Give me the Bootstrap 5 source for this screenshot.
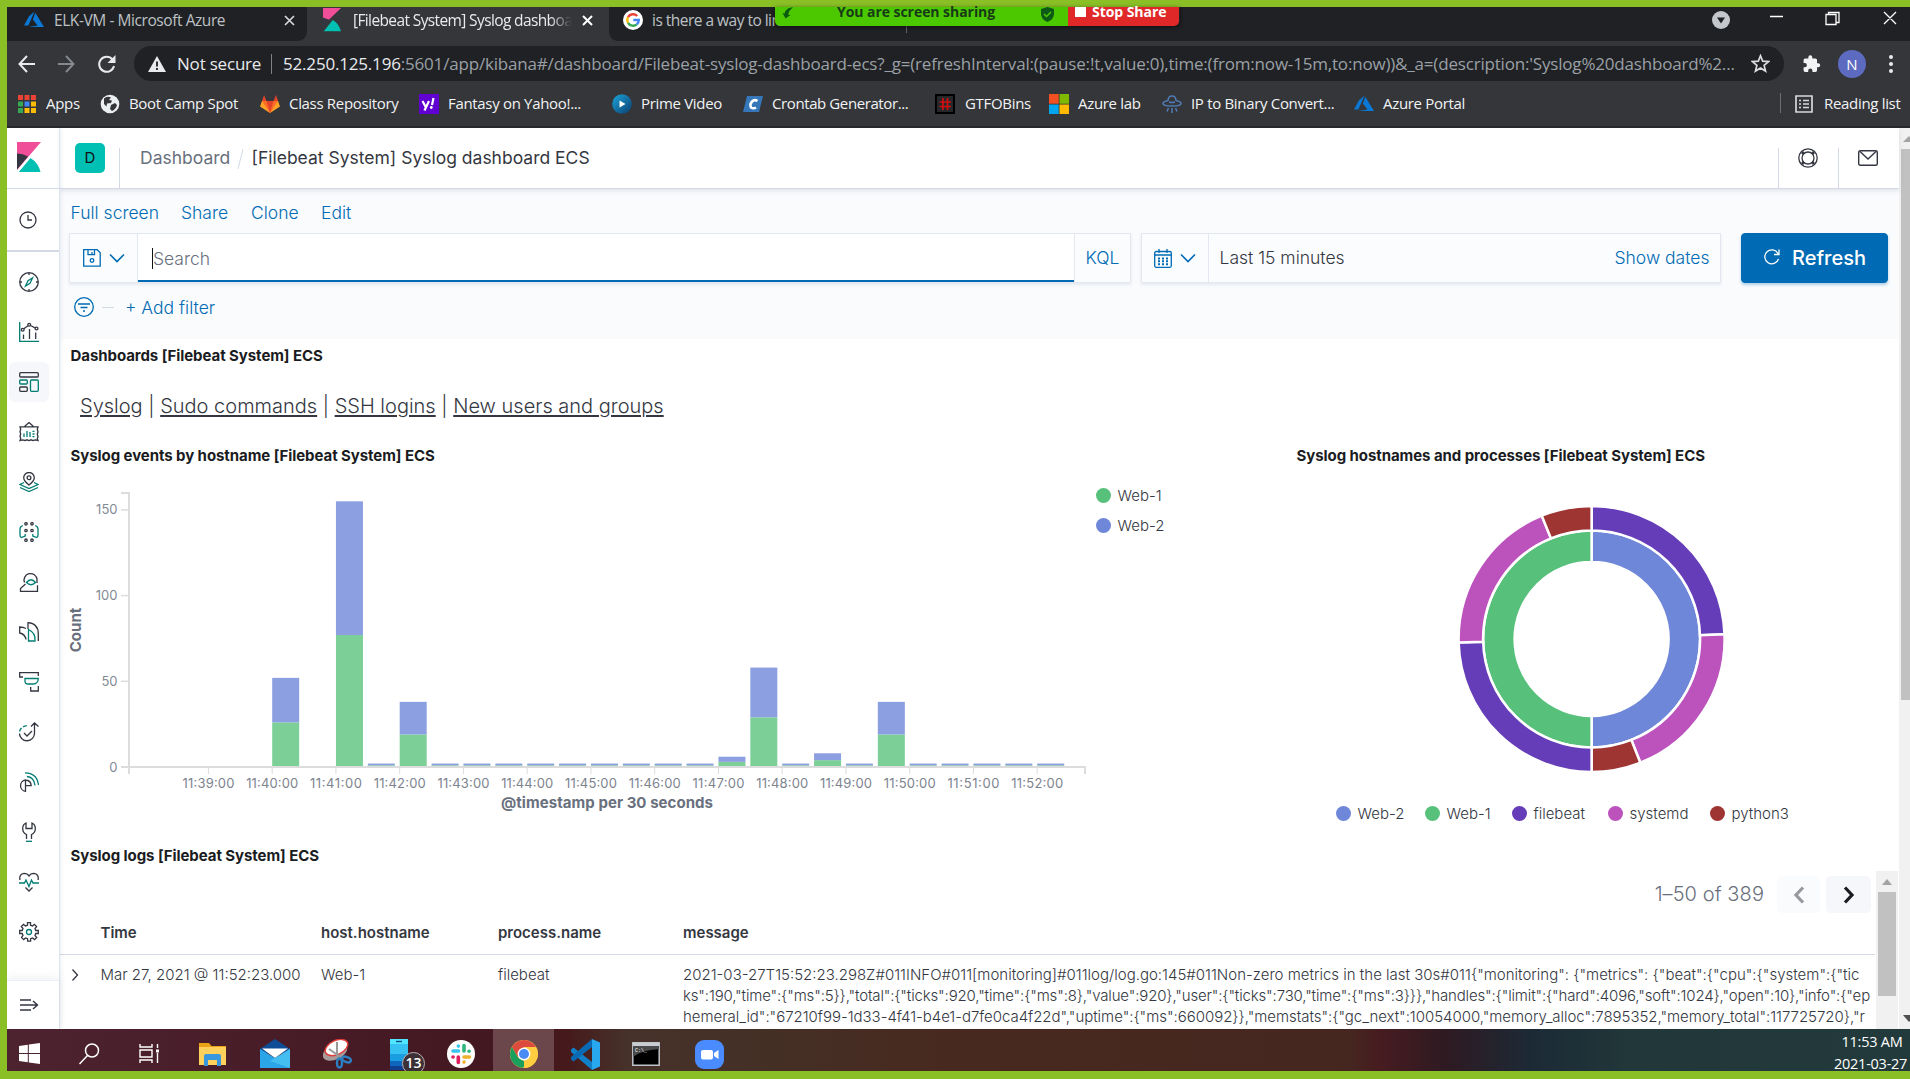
<!DOCTYPE html>
<html lang="en">
<head>
<meta charset="utf-8">
<title>[Filebeat System] Syslog dashboard ECS - Kibana</title>
<link rel="stylesheet" href="https://cdn.jsdelivr.net/npm/bootstrap@5.3.0/dist/css/bootstrap.min.css">
<style>
:root{--share:#8bbf26;--bar:#35363a;--strip:#202124;--ink:#343741;--link:#006bb4;--line:#d3dae6}
html,body{width:1910px;height:1079px;overflow:hidden}
body{font-family:Inter,sans-serif;color:var(--ink);background:#fff;font-size:15px;line-height:21px}
svg{display:block;flex:none}
.screen{width:1910px;height:1079px;background:var(--share);padding:7px 0 8px 7px}
.ui{font-family:"Open Sans","Noto Sans",sans-serif}
.nw{white-space:nowrap}
.strip{height:34px;background:var(--strip);color:#bdc1c6;font-size:15.5px;letter-spacing:-.43px;line-height:26px}
.tabx{height:34px;padding-bottom:8px}
.tab-a{width:300px;padding-left:17px;background:var(--strip);border-bottom-right-radius:9px}
.tab-b{width:302px;padding-left:16px;background:var(--bar);color:#e8eaed}
.tab-c{width:297px;padding-left:14px;background:var(--strip);border-bottom-left-radius:9px;letter-spacing:-.52px}
.under{background:var(--bar)}
.cut{width:219px;overflow:hidden;letter-spacing:-.62px;-webkit-mask-image:linear-gradient(90deg,#000 90%,transparent)}
.share-pill{left:775px;top:7px;height:19px;width:405px;border-radius:0 0 5px 5px;font:700 14px/15px "Open Sans",sans-serif;z-index:5;box-shadow:0 1px 4px #0008}
.share-pill .nw{margin-top:-3px;letter-spacing:-.05px}
.share-go{width:293px;background:#4cc800;color:#183a18;border-bottom-left-radius:5px}
.share-stop{width:111px;background:#e02828;color:#fff;padding-left:7px;border-bottom-right-radius:5px}
.tools{height:46px;background:var(--bar);padding:0 0 1px 11px}
.omni{width:1650px;height:35px;border-radius:18px;background:var(--strip);color:#e8eaed;font-size:17px;padding-left:14px}
.omni .rest{color:#9aa0a6}
.t-url{letter-spacing:-.185px}
.marks{height:39px;background:var(--bar);color:#f1f3f4;font-size:15px;line-height:30px;padding:0 0 6px 11px;letter-spacing:-.32px}
.mk{gap:9px;flex:none}
.mk>span,.mk-r>span{margin-bottom:2px}
.edge{height:2px;background:#27282b}
.kib{height:901px;background:#fff;overflow:hidden}
.rail{width:53px;border-right:1px solid #dfe3ec;box-shadow:1px 0 4px #98a2b333;z-index:2}
.rail .it{height:50px;padding-left:2px}
.rail .it>span{width:40px;height:40px;border-radius:6px;padding:10px}
.rail .on{background:#f5f7fa}
.rail-logo{height:61px;border-bottom:1px solid var(--line);padding:14px 0 0 10px}
.rail-clock{height:63px;border-bottom:2px solid var(--line);padding-left:12px}
.rail-end{height:49px;box-shadow:0 -3px 8px #98a2b326;border-top:1px solid #eceff5;padding-left:12px}
.kmain{width:1839px}
.khead{height:61px;border-bottom:1px solid var(--line);box-shadow:0 2px 4px #98a2b340;z-index:1;font-size:17.5px}
.khead .sep{width:1px;height:40px;margin-top:20px;background:var(--line)}
.ava{width:30px;height:30px;border-radius:5px;background:#00bfb3;color:#111;font-size:15px;line-height:30px;margin:15px 14px 0 15px}
.qzone{height:150px;background:#fafbfd;font-size:17.5px;font-weight:350;color:var(--link)}
.qbox{height:50px;background:#fbfcfd;border:1px solid #e3e7f0;box-shadow:0 2px 3px #98a2b333}
.q-in{width:938px;background:#fff;border-left:1px solid #e3e7f0;border-right:1px solid #e3e7f0;box-shadow:inset 0 -2px var(--link);color:#69707d;padding-left:14px}
.caret{width:1px;height:21px;background:#111}
.btn-refresh{--bs-btn-bg:#006bb4;--bs-btn-border-color:#006bb4;--bs-btn-color:#fff;width:147px;height:50px;border-radius:4px;font-size:20px;font-weight:450;box-shadow:0 2px 3px #006bb44d}
.ptitle{font-size:15px;font-weight:700;color:#1a1c21;line-height:20px;padding-left:10.500px;letter-spacing:-.07px}
.mdlinks{font-size:20px;font-weight:300;line-height:30px;padding-left:20px}
.mdlinks a{color:var(--ink);text-decoration:underline;text-underline-offset:2px;text-decoration-thickness:2px}
.leg{font-size:15px;gap:7px;font-weight:300}
.dot{width:15px;height:15px;border-radius:50%;flex:none}
.pbtn{height:37px;border-radius:5px;background:#f5f7fa}
.pgtext{font-size:20px;color:#69707d;font-weight:300;letter-spacing:.08px}
.thx{height:42px;border-bottom:1px solid var(--line);font-weight:600;padding-bottom:2px}
.c0,.c1,.c2,.c3{flex:none}
.c0{width:40.500px;padding-left:9px}.c1{width:220.500px}.c2{width:177px}.c3{width:185px}
.rowx{font-weight:300}
.ln2{letter-spacing:-.15px}.ln3{letter-spacing:-.035px}
.iscroll{width:22px;height:158px;background:#f1f1f1}
.iscroll i{display:block;width:18px;height:104px;background:#c1c1c1;margin:0 auto}
.pscroll{width:11px;background:#f1f1f1}
.pscroll .thumb{height:551px;background:#c1c1c1;margin-left:2px}
.task{height:42px;color:#fff;background:linear-gradient(90deg,#4d2330 0,#471c27 300px,#43171f 520px,#46191b 560px,#46322a 620px,#443026 740px,#48291f 950px,#452720 1340px,#471c20 1372px,#2e1a22 1440px,#1c2a36 1525px,#213739 1620px,#233a3c 100%)}
.task .ti{width:62px;height:42px;padding-top:6px;flex:none}
.task .act{background:#6b474c}
.badge13{left:32px;top:23px;width:23px;height:23px;border-radius:50%;background:#3a3036;border:1px solid #b9b0b3;font:600 14px/20px "Open Sans",sans-serif}
.clk{font-size:14.5px;line-height:22px;width:76px;letter-spacing:-.25px}
</style>
</head>
<body>
<div class="screen position-relative">

<svg width="0" height="0" class="position-absolute"><defs>
<symbol id="az" viewBox="0 0 20 20"><path fill="#0a78d4" d="M10.5 1.5 5 6.3 0 15.6h4.4zM11.3 2.8 8.9 9.6l4.6 5.8-9 1.6H20z"/></symbol>
<symbol id="kb" viewBox="0 0 24 30"><path fill="#f04e98" d="M0 0h24L0 28z"/><path fill="#343741" d="M0 11.5v16l11-13A22 22 0 0 0 0 11.500z"/><path fill="#00bfb3" d="M13.500 16 1.800 30H23.500A22 22 0 0 0 13.500 16z"/></symbol>
<symbol id="chev" viewBox="0 0 16 10"><path d="m1 1.500 7 7 7-7" fill="none" stroke="#006bb4" stroke-width="1.600"/></symbol>
</defs></svg>

<div class="share-pill position-absolute d-flex">
  <div class="share-go d-flex">
    <svg width="14" height="14" viewBox="0 0 14 14" style="margin-left:6px"><path fill="#0b5a12" d="M12 0 7 1.500Q4 3.500 3.500 6.500L1.500 6l3 5.500 5-3.500-2.500-.5Q8 3.500 12 0z"/></svg>
    <span class="nw" style="margin-left:42px;width:160px">You are screen sharing</span>
    <svg width="13" height="15" viewBox="0 0 13 15" style="margin-left:44px"><path fill="#0d5a17" d="M6.500 0 13 2v5q0 5-6.500 8Q0 12 0 7V2z"/><path d="m3 7 2.500 2.500L10 5" stroke="#4cc800" stroke-width="1.500" fill="none"/></svg>
  </div>
  <div class="share-stop d-flex"><svg width="12" height="10"><rect width="11" height="10" fill="#fff"/></svg><span class="nw" style="margin-left:5px">Stop Share</span></div>
</div>

<div class="strip ui d-flex">
  <div class="under"><div class="tabx tab-a d-flex align-items-center">
    <svg width="20" height="20"><use href="#az"/></svg><span class="nw" style="width:230px;margin-left:10px">ELK-VM - Microsoft Azure</span>
    <svg width="11" height="11" viewBox="0 0 11 11"><path d="m1 1 9 9m0-9-9 9" stroke="#d5d7da" stroke-width="1.700"/></svg></div></div>
  <div class="tabx tab-b d-flex align-items-center">
    <svg width="18" height="24" viewBox="0 0 24 30" preserveAspectRatio="none"><path fill="#f04e98" d="M0 0h24L0 22z"/><path fill="#343741" d="M0 12v14l9-11z"/><path fill="#00bfb3" d="M13 15 1 29H24Q21 19 13 15z"/></svg>
    <span class="nw cut" style="margin-left:12px">[Filebeat System] Syslog dashboard</span>
    <svg width="11" height="11" viewBox="0 0 11 11" style="margin-left:10px"><path d="m1 1 9 9m0-9-9 9" stroke="#fff" stroke-width="2"/></svg></div>
  <div class="under"><div class="tabx tab-c d-flex align-items-center">
    <svg width="20" height="20" viewBox="0 0 20 20"><circle cx="10" cy="10" r="10" fill="#fff"/><g fill="none" stroke-width="2.400"><path stroke="#ea4335" d="M5 7.200A5.800 5.800 0 0 1 14.200 6"/><path stroke="#fbbc05" d="M5 7.200a5.800 5.800 0 0 0 0 5.600"/><path stroke="#34a853" d="M5 12.800a5.800 5.800 0 0 0 8.800 1.500"/><path stroke="#4285f4" d="M13.800 14.300Q15.800 12.600 15.800 10H10.300"/></g></svg>
    <span class="nw" style="margin-left:9px">is there a way to lin</span></div></div>
  <div style="width:1px;height:14px;margin-top:12px;background:#5f6368"></div>
  <div class="d-flex ms-auto align-items-center tabx">
    <svg width="18" height="18" viewBox="0 0 18 18"><circle cx="9" cy="9" r="9" fill="#c4c7cb"/><path d="M5 6.500h8L9 12.500z" fill="#202124"/></svg>
    <svg width="180" height="24" viewBox="0 0 180 24" fill="none" stroke="#fff" stroke-width="1.300"><path d="M40 8.500h13M96 6.500h10v10H96zM98.500 6.500V4.500H109v10h-2.500M154 4l12 12m0-12-12 12"/></svg>
  </div>
</div>

<div class="tools ui d-flex align-items-center">
  <svg width="116" height="24" viewBox="0 0 116 24" fill="none" stroke-width="2"><path stroke="#e8eaed" d="M17 12H2m7-8-7.500 8L9 20"/><path stroke="#85888c" d="M40 12h15m-7-8 7.500 8L48 20"/><path stroke="#e8eaed" d="M94.500 7.500A7.500 7.500 0 1 0 96 14"/><path fill="#e8eaed" d="M97.500 3v8h-8z"/></svg>
  <div class="omni d-flex align-items-center">
    <svg width="18" height="16" viewBox="0 0 18 16"><path fill="#e8eaed" d="M9 0 18 16H0z"/><path d="M9 5.500v5m0 1.500v2" stroke="#202124" stroke-width="1.800"/></svg>
    <span class="nw" style="width:89px;margin-left:11px;letter-spacing:-.2px">Not secure</span>
    <span style="width:1px;height:20px;background:#7d8185;margin-left:5px"></span>
    <span class="nw t-url" style="width:1468px;margin-left:11px">52.250.125.196<span class="rest">:5601/app/kibana#/dashboard/Filebeat-syslog-dashboard-ecs?_g=(refreshInterval:(pause:!t,value:0),time:(from:now-15m,to:now))&amp;_a=(description:'Syslog%20dashboard%2...</span></span>
    <svg width="19" height="19" viewBox="0 0 20 20" fill="none" stroke="#dadce0" stroke-width="1.800"><path d="m10 1.800 2.300 5.700 6.200.5-4.700 4 1.500 6-5.300-3.300L4.700 18l1.500-6L1.500 8l6.200-.5z"/></svg>
  </div>
  <svg width="19" height="20" viewBox="0 0 24 24" style="margin-left:18px"><path fill="#f1f3f4" d="M20.500 11H19V7a2 2 0 0 0-2-2h-4V3.500a2.500 2.500 0 0 0-5 0V5H4a2 2 0 0 0-2 2v3.800h1.500a2.700 2.700 0 0 1 0 5.400H2V20a2 2 0 0 0 2 2h3.800v-1.500a2.700 2.700 0 0 1 5.400 0V22H17a2 2 0 0 0 2-2v-4h1.500a2.500 2.500 0 0 0 0-5z"/></svg>
  <span class="rounded-circle text-center text-white" style="width:28px;height:28px;background:#5c6bc0;margin-left:17px;line-height:28px">N</span>
  <svg width="6" height="20" viewBox="0 0 6 20" fill="#e8eaed" style="margin-left:22px"><circle cx="3" cy="3" r="2"/><circle cx="3" cy="10" r="2"/><circle cx="3" cy="17" r="2"/></svg>
</div>

<div class="marks ui d-flex align-items-center">
  <div class="mk d-flex align-items-center" style="width:82px"><svg width="18" height="18" viewBox="0 0 18 18"><path fill="#ea4335" d="M0 0h5v5H0zM6.500 0h5v5h-5zM13 0h5v5h-5z"/><path fill="#34a853" d="M0 6.500h5v5H0zM0 13h5v5H0z"/><path fill="#4285f4" d="M6.500 6.500h5v5h-5z"/><path fill="#fbbc05" d="M13 6.500h5v5h-5zM6.500 13h5v5h-5zM13 13h5v5h-5z"/></svg><span class="nw" style="margin-left:1px">Apps</span></div>
  <div class="mk d-flex align-items-center" style="width:160px"><svg width="20" height="20" viewBox="0 0 20 20"><circle cx="10" cy="10" r="9.300" fill="#eceff1"/><path fill="#35363a" d="M4 4.500Q7 1.500 11 3.500L9 6l3 .5-1 2.500-4 .5-.5 3L4 10zM11 11l4-2 2 2q-1 4-5 6l-2-2z"/></svg><span class="nw">Boot Camp Spot</span></div>
  <div class="mk d-flex align-items-center" style="width:159px"><svg width="20" height="18" viewBox="0 0 20 18"><path fill="#fca326" d="M2 6 0 11.500 10 18l10-6.500L18 6z"/><path fill="#fc6d26" d="M2 6l8 12 8-12z"/><path fill="#e24329" d="M4 0 2 6h4.500L10 18l3.500-12H18L16 0l-2.500 6h-7z"/></svg><span class="nw">Class Repository</span></div>
  <div class="mk d-flex align-items-center" style="width:193px"><svg width="20" height="20" viewBox="0 0 20 20"><path fill="#6001d2" d="M0 0h20v20H0z"/><path d="m3.500 7 3.200 6M10 7l-4.500 9.500M14.500 4l-1.500 7" stroke="#fff" stroke-width="2.200"/><circle cx="12.300" cy="13.500" r="1.400" fill="#fff"/></svg><span class="nw">Fantasy on Yahoo!...</span></div>
  <div class="mk d-flex align-items-center" style="width:131px"><svg width="20" height="20" viewBox="0 0 20 20"><defs><linearGradient id="pv" x2="1" y2="1"><stop stop-color="#1ba6da"/><stop offset="1" stop-color="#0a3d70"/></linearGradient></defs><circle cx="10" cy="10" r="9.800" fill="url(#pv)"/><path d="M7.500 6.500v7l6-3.500z" fill="#fff"/></svg><span class="nw">Prime Video</span></div>
  <div class="mk d-flex align-items-center" style="width:192px"><svg width="20" height="18" viewBox="0 0 20 18"><path fill="#3577b8" d="M4 1h16l-4 16H0z"/><path d="M14.500 6q-3-2-5.500.5T8 12.500q2.500 1.500 5 0" stroke="#fff" stroke-width="2.600" fill="none"/></svg><span class="nw" style="letter-spacing:-.4px">Crontab Generator...</span></div>
  <div class="mk d-flex align-items-center" style="width:114px"><svg width="20" height="20" viewBox="0 0 20 20"><path fill="#25272a" stroke="#000" stroke-width="2" d="M1 1h18v18H1z"/><path d="M8 4v12m4.500-12v12M4.500 8h11.500M4.500 12.500h11.500" stroke="#d01010" stroke-width="1.700"/></svg><span class="nw" style="margin-left:1px">GTFOBins</span></div>
  <div class="mk d-flex align-items-center" style="width:113px"><svg width="20" height="20" viewBox="0 0 20 20"><path fill="#f25022" d="M0 0h9.700v9.700H0z"/><path fill="#7fba00" d="M10.500 0H20v9.700h-9.500z"/><path fill="#00a4ef" d="M0 10.500h9.700V20H0z"/><path fill="#ffb900" d="M10.500 10.500H20V20h-9.500z"/></svg><span class="nw">Azure lab</span></div>
  <div class="mk d-flex align-items-center" style="width:192px"><svg width="20" height="18" viewBox="0 0 20 18" fill="none" stroke="#4f7cb4" stroke-width="1.500"><path d="M6 6q0-5 4-5t4 5M6 5.500Q1 6.500 1 8.500 1 11 10 11t9-2.500q0-2-5-3M7 7q3 1 6 0M10 13v5M6.500 13 5 16.500M13.500 13l1.500 3.500"/></svg><span class="nw">IP to Binary Convert...</span></div>
  <div class="mk d-flex align-items-center"><svg width="20" height="20"><use href="#az"/></svg><span class="nw">Azure Portal</span></div>
  <div class="mk-r d-flex align-items-center ms-auto" style="width:130px"><span style="width:1px;height:20px;background:#6a6d71"></span>
    <svg width="18" height="18" viewBox="0 0 18 18" style="margin-left:14px" stroke="#d5d7da" fill="none" stroke-width="1.700"><path d="M1 1h16v16H1zM4 5.500h2m2 0h6M4 9h2m2 0h6M4 12.500h2m2 0h6"/></svg><span class="nw" style="margin-left:11px">Reading list</span></div>
</div>
<div class="edge"></div>

<div class="kib d-flex">
  <nav class="rail d-flex flex-column position-relative">
    <div class="rail-logo"><svg width="24" height="30"><use href="#kb"/></svg></div>
    <div class="rail-clock d-flex align-items-center"><svg width="18" height="18" viewBox="0 0 18 18" fill="none" stroke="#343741" stroke-width="1.300"><circle cx="9" cy="9" r="8"/><path d="M9 4v5h4"/></svg></div>
    <div style="height:5px"></div>
    <div class="it d-flex align-items-center"><span><svg width="20" height="20" viewBox="0 0 20 20" fill="none" stroke="#343741" stroke-width="1.300"><circle cx="10" cy="10" r="9.300"/><path d="M10 1v2m0 14v2M1 10h2m14 0h2"/><path stroke="#017d73" d="M13.500 6 11 11.300 6.500 14 9 8.700z"/></svg></span></div>
    <div class="it d-flex align-items-center"><span><svg width="20" height="20" viewBox="0 0 20 20" fill="none" stroke="#343741" stroke-width="1.300"><path stroke="#017d73" d="M.7 0v19.300H20"/><path d="M4.500 17v-4.500M10.500 17V7M16.700 17v-6.500M4.800 6.800 9 3.700m2.500-.2 4.600 2.300"/><circle cx="3.700" cy="7.700" r="1.400"/><circle cx="10.200" cy="2.800" r="1.400"/><circle cx="17.500" cy="6.500" r="1.400"/></svg></span></div>
    <div class="it d-flex align-items-center"><span class="on"><svg width="20" height="20" viewBox="0 0 20 20" fill="none" stroke="#343741" stroke-width="1.300"><rect x=".7" y=".7" width="18.600" height="4.300" rx="1"/><rect x=".7" y="15" width="7.600" height="4.300" rx="1"/><g stroke="#017d73"><rect x=".7" y="8" width="7.600" height="4" rx="1"/><rect x="11.500" y="8" width="7.800" height="11.300" rx="1"/></g></svg></span></div>
    <div class="it d-flex align-items-center"><span><svg width="20" height="20" viewBox="0 0 20 20" fill="none" stroke="#343741" stroke-width="1.300"><path d="M1 4.800h18l-.7 2.500.7 2.500-.7 2.500.7 2.500-.7 2 .7 1.700-2.500-.7-2.500.7-2-.7-2 .7-2-.7-2 .7-2.500-.7-2.500.7.7-2-.7-2.200.7-2.500L1 9.800l.7-2.500zM5.500 4.500l4.500-4 4.500 4"/><path stroke="#017d73" d="M5 15v-3.500M8 15V9m3 6v-5m2.500-.7h2m-2 2.700h2m-2 2.700h2"/></svg></span></div>
    <div class="it d-flex align-items-center"><span><svg width="20" height="20" viewBox="0 0 20 20" fill="none" stroke="#343741" stroke-width="1.300"><path d="M10 13Q4.700 9 4.700 5.800a5.300 5.300 0 0 1 10.600 0Q15.300 9 10 13z"/><circle cx="10" cy="5.800" r="1.900"/><path stroke="#017d73" d="M5 10.500l-4 2 9 4 9-4-4-2M1 15.500l9 4 9-4"/></svg></span></div>
    <div class="it d-flex align-items-center"><span><svg width="20" height="20" viewBox="0 0 20 20" fill="none" stroke="#343741" stroke-width="1.300"><g stroke="#017d73"><path d="M3.800 3.500Q1 4.500 1 7v6q0 2 1.200 2.500l4-1.500V12M16.200 3.500q2.800 1 2.800 3.500v6q0 2-1.200 2.500l-4-1.500V12"/></g><circle cx="7" cy="1.800" r="1.200"/><circle cx="13" cy="1.800" r="1.200"/><circle cx="7" cy="8.500" r="1.200"/><circle cx="13" cy="8.500" r="1.200"/><circle cx="7" cy="18.200" r="1.200"/><circle cx="13" cy="18.200" r="1.200"/></svg></span></div>
    <div class="it d-flex align-items-center"><span><svg width="20" height="20" viewBox="0 0 20 20" fill="none" stroke="#343741" stroke-width="1.300"><path d="M5.500 10.500a6.500 6.500 0 1 1 12.500-3V11M6.500 12 1.500 16.500V19.300h17v-6"/><path stroke="#017d73" d="M7.500 10.500q4.500-5.500 9 0-4.500 4.500-9 0z"/></svg></span></div>
    <div class="it d-flex align-items-center"><span><svg width="20" height="20" viewBox="0 0 20 20" fill="none" stroke="#343741" stroke-width="1.300"><path d="M9 7V.7Q19.300 1.500 19.300 12v7M7 6.500Q4 5 .7 5v6Q6 12 7 17.500"/><path stroke="#017d73" d="M9.500 7.500V19H16Q17 11 9.500 7.500z"/></svg></span></div>
    <div class="it d-flex align-items-center"><span><svg width="20" height="20" viewBox="0 0 20 20" fill="none" stroke="#343741" stroke-width="1.300"><path d="M4 5H.7V.7h18.600V4M19.300 14v5h-7.600v-4"/><path stroke="#017d73" d="M6 6.500h13.300Q19 12 14 12H9Q6 12 6 9z"/></svg></span></div>
    <div class="it d-flex align-items-center"><span><svg width="20" height="20" viewBox="0 0 20 20" fill="none" stroke="#343741" stroke-width="1.300"><path d="M15.500 1v10a7.500 7.500 0 0 1-15 .5M12 4.500 15.500 1 19.500 4.500M5 11l3 3 5-5"/><path stroke="#017d73" stroke-dasharray="4 2" d="M.5 9.500Q2 4 9 3.500"/></svg></span></div>
    <div class="it d-flex align-items-center"><span><svg width="20" height="20" viewBox="0 0 20 20" fill="none" stroke="#343741" stroke-width="1.300"><path d="M6.500 8a5.700 5.700 0 0 0 0 11.300zM6.500 8q5.500.5 5.700 5.600H6.500"/><path stroke="#017d73" d="M8 4.500q7 .5 8 9M6 .9Q18 1 19.500 13"/></svg></span></div>
    <div class="it d-flex align-items-center"><span><svg width="20" height="20" viewBox="0 0 20 20" fill="none" stroke="#343741" stroke-width="1.300"><path d="M7.500 17v-4.500Q3.700 11 3.700 6.500 3.700 2.500 7 1v5.500h6V1q3.300 1.500 3.300 5.500 0 4.500-3.800 6V17"/><path stroke="#017d73" d="M7 19.300h6"/></svg></span></div>
    <div class="it d-flex align-items-center"><span><svg width="20" height="20" viewBox="0 0 20 20" fill="none" stroke="#343741" stroke-width="1.300"><path d="M.9 8Q0 2 5 1.400 8.500 1.400 10 4q1.500-2.600 5-2.600Q20 2 19.100 8M6.500 15.500l3.500 3.500 3.500-3.500"/><path stroke="#017d73" d="M0 11h5.500L7 8l3 6.500L12.500 8l1.500 3h6"/></svg></span></div>
    <div class="it d-flex align-items-center"><span><svg width="20" height="20" viewBox="0 0 20 20" fill="none" stroke="#343741" stroke-width="1.300"><path d="M8.500.7h3v2.500l2 .8 1.900-1.700 2.200 2.200L16 6.500l.8 2h2.500v3h-2.500l-.8 2 1.700 1.900-2.200 2.200-1.900-1.700-2 .8v2.500h-3v-2.500l-2-.8-1.900 1.700-2.200-2.200L4 13.500l-.8-2H.7v-3h2.500l.8-2-1.700-1.900 2.200-2.200L6.500 4l2-.8z"/><circle cx="10" cy="10" r="2.500" stroke="#017d73"/></svg></span></div>
    <div class="rail-end d-flex align-items-center mt-auto"><svg width="20" height="14" viewBox="0 0 20 14" fill="none" stroke="#343741" stroke-width="1.400"><path d="M1 2h11M1 7h17M1 12h11M14 3l4.500 4-4.500 4"/></svg></div>
  </nav>

  <main class="kmain d-flex flex-column">
    <header class="khead d-flex position-relative">
      <div class="ava text-center">D</div><span class="sep"></span>
      <div class="d-flex nw" style="padding:19px 0 0 20px"><span style="width:91px;color:#69707d">Dashboard</span><svg width="7" height="20" style="margin-left:6px;margin-top:2px"><path d="M6 0 1 20" stroke="#d3dae6"/></svg><span style="margin-left:7.500px">[Filebeat System] Syslog dashboard ECS</span></div>
      <span class="sep ms-auto"></span>
      <div style="width:59px;padding:20px 0 0 19px"><svg width="20" height="20" viewBox="0 0 20 20" fill="none" stroke="#343741" stroke-width="1.300"><circle cx="10" cy="10" r="9.200"/><circle cx="10" cy="10" r="6"/><path stroke-width="2.800" d="M4 4l2 2m8 8 2 2M16 4l-2 2m-8 8-2 2"/></svg></div>
      <span class="sep"></span>
      <div style="width:60px;padding:22px 0 0 19px"><svg width="20" height="16" viewBox="0 0 20 16" fill="none" stroke="#343741" stroke-width="1.400"><rect x=".7" y=".7" width="18.600" height="14.600" rx="1.500"/><path d="m2 1.500 8 7.500 8-7.500"/></svg></div>
    </header>

    <section class="qzone">
      <div class="d-flex nw" style="padding:13px 0 0 10.500px;height:44px"><span style="width:110.500px">Full screen</span><span style="width:70px">Share</span><span style="width:70px">Clone</span><span>Edit</span></div>
      <div class="d-flex" style="padding-left:9px">
        <div class="qbox d-flex" style="width:1062px">
          <div class="d-flex align-items-center" style="width:67px;padding-left:13px;gap:8px"><svg width="18" height="18" viewBox="0 0 18 18" fill="none" stroke="#006bb4" stroke-width="1.300"><path d="M.7.7h13.500l3 3v13.500H.7zM5 .7v5h6.500v-5M9 3v2"/><circle cx="9" cy="11.500" r="1.800"/></svg><svg width="16" height="10"><use href="#chev"/></svg></div>
          <div class="q-in d-flex align-items-center"><span class="caret"></span>Search</div>
          <div class="flex-fill text-center" style="line-height:48px">KQL</div>
        </div>
        <div class="qbox d-flex" style="width:580px;margin-left:10px;line-height:48px">
          <div class="d-flex align-items-center" style="width:67px;padding-left:12px;gap:8px;border-right:1px solid #e3e7f0"><svg width="18" height="19" viewBox="0 0 18 19" fill="none" stroke="#006bb4" stroke-width="1.300"><rect x=".7" y="2.500" width="16.600" height="15.800" rx="1.500"/><path d="M.7 6h16.600M5 0v4m8-4v4"/><path d="M4 9.500h10M4 12.300h10M4 15.200h10" stroke-width="1.900" stroke-dasharray="2 2"/></svg><svg width="16" height="10"><use href="#chev"/></svg></div>
          <span style="padding-left:10.500px;color:var(--ink)">Last 15 minutes</span><span class="ms-auto" style="padding-right:10.500px">Show dates</span>
        </div>
        <button class="btn btn-refresh d-flex align-items-center justify-content-center p-0" style="margin-left:20px"><svg width="17" height="18" viewBox="0 0 17 18" fill="none" stroke="#fff" stroke-width="1.300"><path d="M15 4.500A7 7 0 1 0 15.500 10M16 .5v5h-5"/></svg><span style="margin-left:12px">Refresh</span></button>
      </div>
      <div class="d-flex align-items-center" style="padding-left:14px;height:48px"><svg width="20" height="20" viewBox="0 0 20 20" fill="none" stroke="#006bb4" stroke-width="1.300"><circle cx="10" cy="10" r="9.300"/><path d="M4 7h12M6.500 10.500h7M9 14h2"/></svg><span style="width:12px;height:1px;background:#d3dae6;margin-left:8px"></span><span style="margin-left:11px">+ Add filter</span></div>
    </section>

    <section style="height:98px"><div class="ptitle" style="padding-top:7px">Dashboards [Filebeat System] ECS</div>
      <div class="mdlinks nw" style="padding-top:25px"><a href="#">Syslog</a> | <a href="#">Sudo commands</a> | <a href="#">SSH logins</a> | <a href="#">New users and groups</a></div></section>

    <section class="d-flex" style="height:402px">
      <div style="width:1226px">
        <div class="ptitle" style="padding-top:9px">Syslog events by hostname [Filebeat System] ECS</div>
        <div class="d-flex">
          <svg id="histo" width="1030" height="350" viewBox="60 466 1030 350" font-family="Inter,sans-serif"></svg>
          <div style="padding:19px 0 0 5.500px"><div class="leg d-flex align-items-center" style="height:21px;margin-bottom:9px"><span class="dot" style="background:#57c17b"></span>Web-1</div><div class="leg d-flex align-items-center"><span class="dot" style="background:#6f87d8"></span>Web-2</div></div>
        </div>
      </div>
      <div style="width:613px">
        <div class="ptitle" style="padding-top:9px">Syslog hostnames and processes [Filebeat System] ECS</div>
        <svg id="donut" width="613" height="337" viewBox="1286 466 613 337"></svg>
        <div class="d-flex leg nw" style="gap:0;padding-left:49.500px"><div class="leg d-flex align-items-center" style="width:89px"><span class="dot" style="background:#6f87d8"></span>Web-2</div><div class="leg d-flex align-items-center" style="width:87px"><span class="dot" style="background:#57c17b"></span>Web-1</div><div class="leg d-flex align-items-center" style="width:96px"><span class="dot" style="background:#663db8"></span>filebeat</div><div class="leg d-flex align-items-center" style="width:102px"><span class="dot" style="background:#bc52bc"></span>systemd</div><div class="leg d-flex align-items-center"><span class="dot" style="background:#9e3533"></span>python3</div></div>
      </div>
    </section>

    <section>
      <div class="ptitle" style="padding-top:7px;height:32px">Syslog logs [Filebeat System] ECS</div>
      <div class="d-flex">
        <div style="width:1815px">
          <div class="d-flex align-items-center justify-content-end" style="height:40px;padding-top:3px;margin-top:2px;padding-right:4px"><span class="pgtext nw" style="margin-right:13px">1–50 of 389</span>
            <span class="pbtn d-flex align-items-center justify-content-center" style="width:43px;background:#fafbfd;margin-right:6px"><svg width="12" height="18" viewBox="0 0 12 18" fill="none" stroke="#98989e" stroke-width="3.200"><path d="m10 1.500-7 7.500 7 7.500"/></svg></span><span class="pbtn d-flex align-items-center justify-content-center" style="width:45px"><svg width="12" height="18" viewBox="0 0 12 18" fill="none" stroke="#1a1c21" stroke-width="3.200"><path d="m2 1.500 7 7.500-7 7.500"/></svg></span></div>
          <div class="thx d-flex align-items-center nw"><span class="c0"></span><span class="c1">Time</span><span class="c2">host.hostname</span><span class="c3">process.name</span><span>message</span></div>
          <div class="rowx d-flex nw" style="padding-top:9px"><span class="c0"><svg width="10" height="21" viewBox="0 0 10 21" fill="none" stroke="#343741" stroke-width="1.300" style="margin-left:2px"><path d="m1.500 5.500 5 5.500-5 5.500"/></svg></span><span class="c1">Mar 27, 2021 @ 11:52:23.000</span><span class="c2">Web-1</span><span class="c3">filebeat</span>
            <span>2021-03-27T15:52:23.298Z#011INFO#011[monitoring]#011log/log.go:145#011Non-zero metrics in the last 30s#011{"monitoring": {"metrics": {"beat":{"cpu":{"system":{"tic<br><span class="ln2">ks":190,"time":{"ms":5}},"total":{"ticks":920,"time":{"ms":8},"value":920},"user":{"ticks":730,"time":{"ms":3}}},"handles":{"limit":{"hard":4096,"soft":1024},"open":10},"info":{"ep</span><br><span class="ln3">hemeral_id":"67210f99-1d33-4f41-b4e1-d7fe0ca4f22d","uptime":{"ms":660092}},"memstats":{"gc_next":10054000,"memory_alloc":7895352,"memory_total":117725720},"r</span></span></div>
        </div>
        <div class="iscroll" style="margin-left:1px"><svg width="22" height="21"><path d="M6 14h10l-5-6z" fill="#a3a3a3"/></svg><i></i></div>
      </div>
    </section>
  </main>
  <div class="pscroll d-flex flex-column"><svg width="11" height="21"><path d="M4 14h11l-5-6z" fill="#a3a3a3"/></svg><div class="thumb"></div><svg width="11" height="22" class="mt-auto"><path d="M4 8h12l-6 7z" fill="#505050"/></svg></div>
</div>

<div class="task ui d-flex overflow-hidden">
  <div class="ti" style="width:54px;padding:14px 0 0 12px"><svg width="21" height="21" viewBox="0 0 21 21" fill="#fff"><path d="M0 3l8.800-1.200V10H0zM9.800 1.600 21 0v10H9.800zM0 11h8.800v8.300L0 18zM9.800 11H21v10L9.800 19.400z"/></svg></div>
  <div class="ti" style="padding:14px 0 0 17px;width:61px"><svg width="22" height="22" viewBox="0 0 22 22" fill="none" stroke="#fff" stroke-width="1.500"><circle cx="14" cy="7.500" r="6.500"/><path d="M9.500 12.500 1.500 21"/></svg></div>
  <div class="ti" style="padding:15px 0 0 17px"><svg width="21" height="19" viewBox="0 0 21 19" fill="none" stroke="#fff" stroke-width="1.400"><path d="M1 0v3h12V0M1 19v-3h12v3M1 6h12v7H1zM18.500 0v4m0 5v10"/><path d="M17 5.500h3v3h-3z" fill="#fff" stroke="none"/></svg></div>
  <div class="ti" style="padding:13px 0 0 15px;width:62px"><svg width="27" height="24" viewBox="0 0 27 24"><path fill="#e8a317" d="M0 1h10l2.500 3H27v4H0z"/><path fill="#ffd15c" d="M0 5h27v18H0z"/><path fill="#3a96dd" d="M5 24V14q0-2 2-2h13q2 0 2 2v10h-4v-6H9v6z"/></svg></div>
  <div class="ti" style="padding-top:10px;padding-left:14px"><svg width="30" height="29" viewBox="0 0 30 29"><path fill="#0f4c96" d="M15 0 30 10v4H0v-4z"/><path fill="#fff" d="M2 9.500h26L15 19z"/><path fill="#2ca5e8" d="M0 10l15 9 15-9v19H0z"/><path fill="#4fc8f4" d="M30 10v19L10 22z" opacity=".7"/></svg></div>
  <div class="ti" style="padding-left:15px;padding-top:10px"><svg width="29" height="30" viewBox="0 0 29 30"><ellipse cx="12" cy="13" rx="13" ry="7.500" transform="rotate(-25 12 13)" fill="#a99a9a"/><ellipse cx="13.500" cy="8.500" rx="12" ry="7" transform="rotate(-25 13.500 8.500)" fill="#fff" stroke="#df3d3a" stroke-width="1.500"/><path d="M14 3v15m-8-8 13 9" stroke="#999" stroke-width="2"/><g fill="none" stroke="#2b7fc3" stroke-width="2.400"><ellipse cx="16.500" cy="24" rx="2.500" ry="4.500"/><ellipse cx="23.500" cy="20.500" rx="4.500" ry="2.500" transform="rotate(20 23.500 20.500)"/></g></svg></div>
  <div class="ti position-relative" style="padding-left:20px;padding-top:10px"><svg width="18" height="31" viewBox="0 0 18 31"><path fill="#50e6ff" d="M0 0h18v6H0z"/><path fill="#35c1f1" d="M0 5h18v10H0z"/><path fill="#1b9de2" d="M0 15h18v7H0z"/><path fill="#0f67bd" d="M0 22h18v5H0z"/><path fill="#103f91" d="M0 27h18v4H0z"/><path d="M6 2.500h6" stroke="#114a8b" stroke-width="1.400"/></svg><span class="badge13 position-absolute text-center">13</span></div>
  <div class="ti" style="padding-left:15px;padding-top:11px;width:61px"><svg width="28" height="28" viewBox="0 0 28 28"><circle cx="14" cy="14" r="14" fill="#fff"/><g stroke-width="3.600" stroke-linecap="round"><path stroke="#36c5f0" d="M6 11h5.500M11.300 6v.1"/><path stroke="#2eb67d" d="M17 5.500V11M22 11.300h.1"/><path stroke="#ecb22e" d="M17 17h5.500M17 22v.1"/><path stroke="#e01e5a" d="M11.300 17v5.500M6 17h.1"/></g></svg></div>
  <div class="ti act d-flex justify-content-center" style="width:61px;padding-top:11px"><svg width="28" height="28" viewBox="0 0 28 28"><circle cx="14" cy="14" r="14" fill="#ffcd40"/><path fill="#dd4b3e" d="M1.900 7A14 14 0 0 1 26.100 7H14l-6 10.500z"/><path fill="#1a9f5c" d="M1.900 7 8 17.500 14 21 14 28A14 14 0 0 1 1.900 7z"/><path fill="#ffcd40" d="M26.100 7.500A14 14 0 0 1 13 28l7-11-1-9.500z"/><circle cx="14" cy="14" r="6.400" fill="#fff"/><circle cx="14" cy="14" r="5" fill="#4a8af4"/></svg></div>
  <div class="ti d-flex justify-content-center" style="padding-top:10px;width:61px"><svg width="30" height="31" viewBox="0 0 30 31"><path fill="#1080c8" d="M1 10.500 3.500 8.500 22 23v8L1 13z"/><path fill="#0a6ab4" d="M1 20.500 3.500 22.500 22 8V0L1 18z"/><path fill="#28a8ee" d="M22 0l8 3.500v24L22 31z"/></svg></div>
  <div class="ti d-flex justify-content-center" style="padding-top:13px;width:62px"><svg width="28" height="24" viewBox="0 0 28 24"><path fill="#000" stroke="#bfc4c8" stroke-width="1.500" d="M.8.8h26.400v22.400H.8z"/><path fill="#c9cdd1" d="M1 1h26v3H1z"/><path d="M1 4h26v3Q10 8 1 15z" fill="#4a4a4a"/><text x="3" y="10" font-size="5" fill="#fff" font-family="Liberation Mono">C:\_</text></svg></div>
  <div class="ti d-flex justify-content-center" style="padding-top:11px;width:64px"><svg width="29" height="29" viewBox="0 0 29 29"><rect width="29" height="29" rx="9" fill="#4a8cff"/><rect x="6" y="10" width="12" height="9.500" rx="2" fill="#fff"/><path fill="#fff" d="m19 13 4.500-3v9L19 16z"/></svg></div>
  <div class="clk ms-auto nw" style="padding-top:2px"><div class="text-center">11:53 AM</div><div>2021-03-27</div></div>
</div>
</div>

<script src="https://cdn.jsdelivr.net/npm/bootstrap@5.3.0/dist/js/bootstrap.bundle.min.js"></script>
<script>
// stacked histogram: one entry per 30 s bucket starting at 11:40:00, [Web-1, Web-2]
const counts = {0:[26,26],2:[77,78],4:[19,19],14:[3,3],15:[29,29],17:[4,4],19:[19,19]};
const x0 = 272.2, step = 31.875, base = 767, unit = 1.714;
let h = '';
for (let i = 0; i <= 24; i++) {
  if (i === 1) continue;
  const [a, b] = counts[i] || [1, 1], x = x0 + i * step, ya = base - a * unit, yb = ya - b * unit;
  h += `<rect x="${x}" y="${ya}" width="27" height="${a * unit}" fill="#7ccf97"/><rect x="${x}" y="${yb}" width="27" height="${b * unit}" fill="#8c9fe0"/>`;
}
h += '<path d="M121 493h8V774M121 767h964v7" fill="none" stroke="#dcdcdc" stroke-width="2"/>';
[0, 50, 100, 150].forEach(v => {
  const y = base - v * unit;
  h += `<path d="M121 ${y}h8" stroke="#dcdcdc" stroke-width="1.5"/><text x="117.500" y="${y + 4.5}" text-anchor="end" font-size="13" fill="#848a95">${v}</text>`;
});
for (let m = 39; m <= 52; m++) {
  const x = x0 + (m - 40) * step * 2;
  h += `<path d="M${x} 767v7" stroke="#dcdcdc"/><text x="${x}" y="788" text-anchor="middle" font-size="13" textLength="52" fill="#7d838f">11:${m}:00</text>`;
}
h += '<text x="607" y="808" text-anchor="middle" font-size="15" font-weight="700" textLength="212" fill="#69707d">@timestamp per 30 seconds</text>';
h += '<text transform="translate(81 630) rotate(-90)" text-anchor="middle" font-size="15" font-weight="700" fill="#69707d">Count</text>';
document.getElementById('histo').innerHTML = h;

// two-ring donut: [start, end, inner, outer, fill]
const rings = [[0,180,77,108.5,'#6f87d8'],[180,360,77,108.5,'#57c17b'],[0,88,108.5,133,'#663db8'],[88,158.5,108.5,133,'#bc52bc'],[158.5,180,108.5,133,'#9e3533'],[180,268.5,108.5,133,'#663db8'],[268.5,338,108.5,133,'#bc52bc'],[338,360,108.5,133,'#9e3533']];
const pt = (r, a) => { a = a * Math.PI / 180; return (1591.6 + r * Math.sin(a)).toFixed(2) + ' ' + (639 - r * Math.cos(a)).toFixed(2); };
document.getElementById('donut').innerHTML = rings.map(([s, e, r, R, f]) =>
  `<path d="M${pt(R, s)}A${R} ${R} 0 0 1 ${pt(R, e)}L${pt(r, e)}A${r} ${r} 0 0 0 ${pt(r, s)}z" fill="${f}" stroke="#fff" stroke-width="2.5"/>`
).join('');
</script>
</body>
</html>
